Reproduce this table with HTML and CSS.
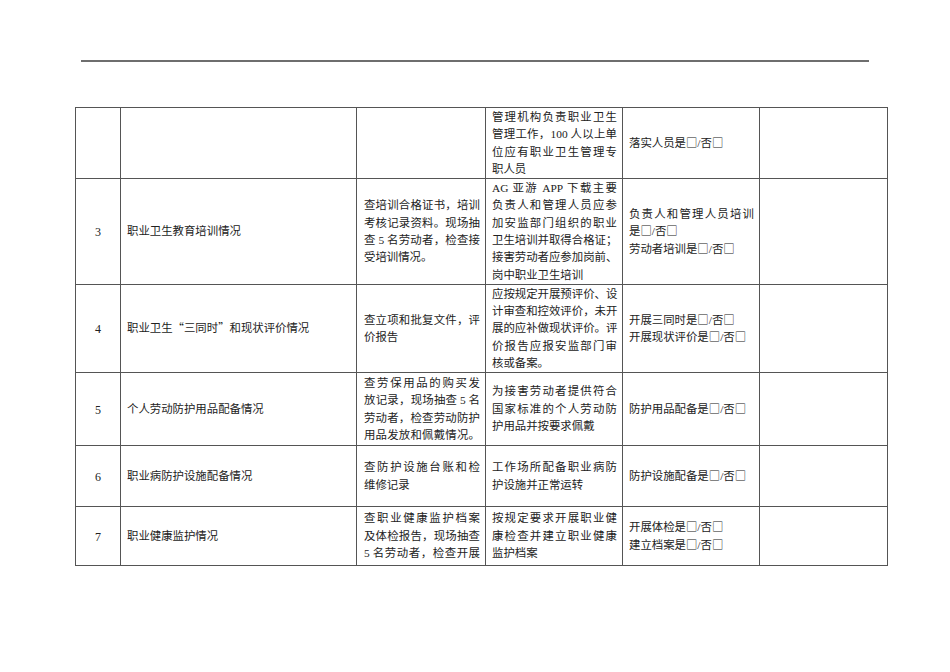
FILE: index.html
```html
<!DOCTYPE html>
<html lang="zh-CN">
<head>
<meta charset="utf-8">
<title>职业卫生检查表</title>
<link rel="stylesheet" href="styles.css">
</head>
<body>
<div class="page">
  <div class="rule"></div>
  <table class="grid">
    <colgroup>
      <col class="c1"><col class="c2"><col class="c3"><col class="c4"><col class="c5"><col class="c6">
    </colgroup>
    <tbody>
      <tr class="r1">
        <td class="num"></td>
        <td class="item"></td>
        <td class="method"></td>
        <td class="req">
          <span class="ln full">管理机构负责职业卫生</span>
          <span class="ln full">管理工作，<span class="lat">100</span> 人以上单</span>
          <span class="ln full">位应有职业卫生管理专</span>
          <span class="ln">职人员</span>
        </td>
        <td class="res"><span class="ln">落实人员是□<span class="lat">/</span>否□</span></td>
        <td class="note"></td>
      </tr>
      <tr class="r3">
        <td class="num"><span class="lat">3</span></td>
        <td class="item">职业卫生教育培训情况</td>
        <td class="method">
          <span class="ln full">查培训合格证书，培训</span>
          <span class="ln full">考核记录资料。现场抽</span>
          <span class="ln full">查 <span class="lat">5</span> 名劳动者，检查接</span>
          <span class="ln">受培训情况。</span>
        </td>
        <td class="req">
          <span class="ln full"><span class="lat">AG</span> 亚游 <span class="lat">APP</span> 下载主要</span>
          <span class="ln full">负责人和管理人员应参</span>
          <span class="ln full">加安监部门组织的职业</span>
          <span class="ln full">卫生培训并取得合格证；</span>
          <span class="ln full">接害劳动者应参加岗前、</span>
          <span class="ln">岗中职业卫生培训</span>
        </td>
        <td class="res">
          <span class="ln full">负责人和管理人员培训</span>
          <span class="ln">是□<span class="lat">/</span>否□</span>
          <span class="ln">劳动者培训是□<span class="lat">/</span>否□</span>
        </td>
        <td class="note"></td>
      </tr>
      <tr class="r4">
        <td class="num"><span class="lat">4</span></td>
        <td class="item">职业卫生“三同时”和现状评价情况</td>
        <td class="method">
          <span class="ln full">查立项和批复文件，评</span>
          <span class="ln">价报告</span>
        </td>
        <td class="req">
          <span class="ln full">应按规定开展预评价、设</span>
          <span class="ln full">计审查和控效评价，未开</span>
          <span class="ln full">展的应补做现状评价。评</span>
          <span class="ln full">价报告应报安监部门审</span>
          <span class="ln">核或备案。</span>
        </td>
        <td class="res">
          <span class="ln">开展三同时是□<span class="lat">/</span>否□</span>
          <span class="ln">开展现状评价是□<span class="lat">/</span>否□</span>
        </td>
        <td class="note"></td>
      </tr>
      <tr class="r5">
        <td class="num"><span class="lat">5</span></td>
        <td class="item">个人劳动防护用品配备情况</td>
        <td class="method">
          <span class="ln full">查劳保用品的购买发</span>
          <span class="ln full">放记录，现场抽查 <span class="lat">5</span> 名</span>
          <span class="ln full">劳动者，检查劳动防护</span>
          <span class="ln full">用品发放和佩戴情况。</span>
        </td>
        <td class="req">
          <span class="ln full">为接害劳动者提供符合</span>
          <span class="ln full">国家标准的个人劳动防</span>
          <span class="ln">护用品并按要求佩戴</span>
        </td>
        <td class="res"><span class="ln">防护用品配备是□<span class="lat">/</span>否□</span></td>
        <td class="note"></td>
      </tr>
      <tr class="r6">
        <td class="num"><span class="lat">6</span></td>
        <td class="item">职业病防护设施配备情况</td>
        <td class="method">
          <span class="ln full">查防护设施台账和检</span>
          <span class="ln">维修记录</span>
        </td>
        <td class="req">
          <span class="ln full">工作场所配备职业病防</span>
          <span class="ln">护设施并正常运转</span>
        </td>
        <td class="res"><span class="ln">防护设施配备是□<span class="lat">/</span>否□</span></td>
        <td class="note"></td>
      </tr>
      <tr class="r7">
        <td class="num"><span class="lat">7</span></td>
        <td class="item">职业健康监护情况</td>
        <td class="method">
          <span class="ln full">查职业健康监护档案</span>
          <span class="ln full">及体检报告，现场抽查</span>
          <span class="ln full"><span class="lat">5</span> 名劳动者，检查开展</span>
        </td>
        <td class="req">
          <span class="ln full">按规定要求开展职业健</span>
          <span class="ln full">康检查并建立职业健康</span>
          <span class="ln">监护档案</span>
        </td>
        <td class="res">
          <span class="ln">开展体检是□<span class="lat">/</span>否□</span>
          <span class="ln">建立档案是□<span class="lat">/</span>否□</span>
        </td>
        <td class="note"></td>
      </tr>
    </tbody>
  </table>
</div>
</body>
</html>
```
FILE: styles.css
```css
html, body {
  margin: 0;
  padding: 0;
  background: #ffffff;
}

.page {
  width: 950px;
  height: 672px;
  overflow: hidden;
  font-family: "Noto Sans CJK SC", "Liberation Serif", sans-serif;
  color: #222222;
  font-size: 11.4px;
}

.rule {
  margin: 60px 0 0 81px;
  width: 788px;
  height: 2px;
  background: #6e6e6e;
}

.grid {
  margin: 45px 0 0 75px;
  width: 812px;
  border-collapse: collapse;
  table-layout: fixed;
}

.c1 { width: 45px; }
.c2 { width: 236px; }
.c3 { width: 129px; }
.c4 { width: 137px; }
.c5 { width: 137px; }
.c6 { width: 128px; }

.grid td {
  border: 1px solid #555555;
  vertical-align: middle;
  padding: 0 5px 0 6px;
  line-height: 17.4px;
  text-align: left;
  overflow: hidden;
}

.r1 { height: 70px; }
.r3 { height: 106px; }
.r4 { height: 87px; }
.r5 { height: 73px; }
.r6 { height: 61px; }
.r7 { height: 59px; }

.grid td.num {
  text-align: center;
  padding: 0;
  font-size: 12px;
}

.grid td.item {
  padding-left: 6px;
}

.grid td.method {
  padding: 0 5px 0 7px;
}

.ln {
  display: block;
  white-space: nowrap;
  height: 17.4px;
}

.ln.full {
  text-align: justify;
  text-align-last: justify;
}

.lat {
  font-family: "Liberation Serif", serif;
  line-height: 1;
}
```
